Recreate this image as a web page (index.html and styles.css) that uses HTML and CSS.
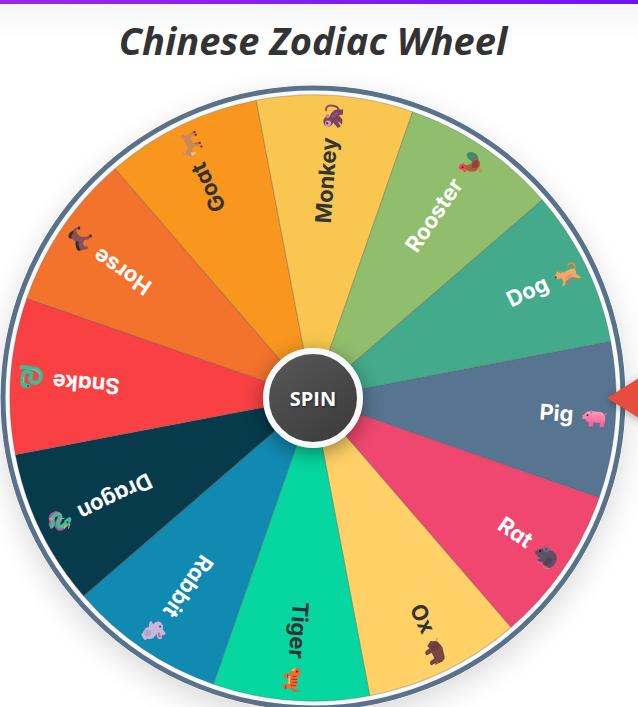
FILE: index.html
```html
<!DOCTYPE html>
<html lang="en">
<head>
    <meta charset="UTF-8">
    <meta name="viewport" content="width=device-width, initial-scale=1.0">
    <title>Chinese Zodiac Wheel</title>
    <link rel="stylesheet" href="styles.css">
</head>
<body>

<main class="page">
    <h1 class="title">Chinese Zodiac Wheel</h1>

    <div class="wheel-container">
        <svg class="wheel" viewBox="-313 -313 626 626" role="img" aria-label="Zodiac wheel">
            <defs>
                <path id="slice" d="M0 0L292.68 -78.42A303 303 0 0 1 292.68 78.42Z"/>
                <linearGradient id="pinkSkin" x1="0" y1="0" x2="0" y2="1">
                    <stop offset="0" stop-color="#ff9fb5"/>
                    <stop offset="1" stop-color="#f8589a"/>
                </linearGradient>
            </defs>

            <circle class="rim" r="310"/>

            <g transform="rotate(4.2)">
                <!-- Pig -->
                <g class="slice">
                    <use href="#slice" fill="#577590"/>
                    <text x="261" y="5">Pig</text>
                    <g transform="translate(282 0)">
                        <path fill="#e84c86" d="M-5 3h4v5h-4zM6 3h4v5h-4z"/>
                        <path fill="url(#pinkSkin)" d="M-11 -2Q-9 -7 -5 -7L-3 -8L-1 -7H6Q11 -6 11 0L10 8H6V4H-1V8H-5V4Q-8 4 -9 1L-11 1Z"/>
                        <path fill="#ff7d9b" d="M-12 -3h3v4h-3z"/>
                        <path fill="#e0608c" d="M-5 -8L-2 -7L-3 -4Z"/>
                        <circle cx="-7" cy="-3" r="1" fill="#402030"/>
                        <path d="M10 -4l2 -2" stroke="#ff7d9b" stroke-width="1"/>
                    </g>
                </g>

                <!-- Rat -->
                <g class="slice" transform="rotate(30)">
                    <use href="#slice" fill="#ef476f"/>
                    <text x="261" y="5">Rat</text>
                    <g transform="translate(282 0)">
                        <path d="M9 6Q10 11 3 10Q-2 8 -5 10" fill="none" stroke="#b9839c" stroke-width="1"/>
                        <path fill="#5d5264" d="M-12 2Q-10 -4 -6 -5Q-2 -6 1 -8Q7 -9 10 -4Q13 3 9 8H3L1 6L-3 8H-6L-4 5Q-10 5 -12 2Z"/>
                        <path fill="#4f4656" d="M1 1Q5 -4 8 1Q9 5 4 8H1Z"/>
                        <circle cx="-4" cy="-6" r="3" fill="#776980"/>
                        <circle cx="-4" cy="-6" r="1" fill="#493a51"/>
                        <circle cx="-8" cy="-1" r="1" fill="#17121b"/>
                    </g>
                </g>

                <!-- Ox -->
                <g class="slice dark" transform="rotate(60)">
                    <use href="#slice" fill="#ffd166"/>
                    <text x="261" y="5">Ox</text>
                    <g transform="translate(282 0)">
                        <path fill="#56303a" d="M-4 2h3v8h-3zM7 2h3v8h-3z"/>
                        <path fill="#7b4548" d="M-12 0L-9 -6Q-3 -8 -1 -8Q3 -7 8 -6Q12 -5 11 1L9 5L10 9H6L5 4H-1V9H-5L-6 4L-9 5Z"/>
                        <path fill="#6d3c43" d="M-10 -4Q-5 -8 -2 -4Q0 1 -6 4Z"/>
                        <path d="M-9 -5Q-12 -6 -11 -8" fill="none" stroke="#b98e7d" stroke-width="1"/>
                        <path d="M11 -2V6" stroke="#56303a" stroke-width="1"/>
                    </g>
                </g>

                <!-- Tiger -->
                <g class="slice dark" transform="rotate(90)">
                    <use href="#slice" fill="#06d6a0"/>
                    <text x="261" y="5">Tiger</text>
                    <g transform="translate(282 0)">
                        <path d="M9 0Q12 -1 11 -7" fill="none" stroke="#e85a27" stroke-width="2" stroke-linecap="round"/>
                        <path fill="#ef6a32" d="M-11 -6L-9 -8L-7 -7L-4 -8L-3 -5H7Q10 -4 9 1L10 9H6L5 4H0L-1 9H-5L-5 3L-9 2L-12 -2Z"/>
                        <path fill="#ffb45f" d="M-12 -3L-8 -1L-8 2L-10 1ZM-3 2H5V4H-3Z"/>
                        <path d="M-3 -4V0M0 -5V1M3 -5V0M6 -4V1M-5 5h4M6 6h4" stroke="#a3342f" stroke-width="1"/>
                        <circle cx="-8" cy="-4" r="1" fill="#402018"/>
                    </g>
                </g>

                <!-- Rabbit -->
                <g class="slice" transform="rotate(120)">
                    <use href="#slice" fill="#118ab2"/>
                    <text x="261" y="5">Rabbit</text>
                    <g transform="translate(282 0)">
                        <path fill="#c9b6dc" d="M-11 0Q-10 -5 -6 -6L-5 -10Q-2 -12 -1 -8Q3 -12 4 -8Q4 -5 1 -3Q9 -4 10 2Q14 2 12 6L10 9H2L0 7L-4 9H-7L-5 5Q-10 5 -11 0Z"/>
                        <path fill="#b5a0cd" d="M2 3Q6 -1 9 4Q9 8 3 8Z"/>
                        <path d="M2 -8L-1 -4" stroke="#d9628d" stroke-width="2"/>
                        <circle cx="-7" cy="-2" r="1" fill="#533b65"/>
                    </g>
                </g>

                <!-- Dragon -->
                <g class="slice" transform="rotate(150)">
                    <use href="#slice" fill="#073b4c"/>
                    <text x="261" y="5">Dragon</text>
                    <g transform="translate(282 0)">
                        <path d="M-5 -6Q4 -10 4 -4Q3 -1 -1 1Q-5 5 0 8Q6 9 7 3Q8 -1 11 -1" fill="none" stroke="#c44793" stroke-width="5"/>
                        <path d="M-6 -5Q3 -8 3 -4Q2 -1 -2 2Q-5 6 0 7Q5 7 6 2Q7 -2 11 -2" fill="none" stroke="#48b798" stroke-width="4"/>
                        <path fill="#48b798" d="M-12 -4L-7 -9L-2 -6L-5 -2L-11 -1Z"/>
                        <path d="M-8 -8L-5 -11M-5 -7L-1 -9M-2 1L-6 0M5 4L8 6" stroke="#e7bf59" stroke-width="1"/>
                        <circle cx="-7" cy="-5" r="1" fill="#173838"/>
                    </g>
                </g>

                <!-- Snake -->
                <g class="slice" transform="rotate(180)">
                    <use href="#slice" fill="#f94144"/>
                    <text x="261" y="5">Snake</text>
                    <g transform="translate(282 0)">
                        <path d="M11 9Q7 10 1 9Q-9 9 -9 1Q-8 -6 -2 -5Q3 -3 1 1Q-1 4 3 5Q9 6 9 0V-6Q8 -10 3 -9" fill="none" stroke="#3dbb93" stroke-width="4" stroke-linecap="round"/>
                        <path d="M-8 3Q-6 8 1 8M8 -6V0" fill="none" stroke="#6ed2a3" stroke-width="1"/>
                        <path fill="#3dbb93" d="M0 -9Q3 -13 8 -10L7 -6L2 -7Z"/>
                        <circle cx="3" cy="-9" r="1" fill="#24574f"/>
                    </g>
                </g>

                <!-- Horse -->
                <g class="slice" transform="rotate(210)">
                    <use href="#slice" fill="#f3722c"/>
                    <text x="261" y="5">Horse</text>
                    <g transform="translate(282 0)">
                        <path fill="#342c35" d="M7 -4Q12 -7 12 0L10 5L8 1Z"/>
                        <path fill="#875157" d="M-12 -3L-7 -9L-5 -10L-3 -7L0 -4H6Q10 -3 9 2L11 5L8 10H6L8 5L4 3H0L-4 6L-6 10H-8L-7 5L-4 2L-5 -2L-8 -3L-10 -1Z"/>
                        <path d="M-6 -9Q-1 -8 1 -3" fill="none" stroke="#342c35" stroke-width="3"/>
                        <path d="M-8 8l2 2M6 8l2 2" stroke="#342c35" stroke-width="2"/>
                    </g>
                </g>

                <!-- Goat -->
                <g class="slice dark" transform="rotate(240)">
                    <use href="#slice" fill="#f8961e"/>
                    <text x="261" y="5">Goat</text>
                    <g transform="translate(282 0)">
                        <path fill="#b86e4c" d="M-3 1L0 1L-2 10H-4ZM6 1L9 1L10 10H8Z"/>
                        <path fill="#cc8858" d="M-12 -4L-8 -8L-5 -7L-2 -4H7L11 -6L12 -3L9 0L10 4L8 9H6L6 3H-1L-5 9H-7L-4 3L-5 -1L-10 -1Z"/>
                        <path d="M-8 -7Q-8 -10 -4 -10" fill="none" stroke="#aaa27e" stroke-width="2"/>
                        <path d="M-7 8v2M-3 8v2M6 8v2M9 8v2" stroke="#7c263a" stroke-width="2"/>
                        <path fill="#eec68e" d="M-12 -4L-8 -3L-10 2Z"/>
                    </g>
                </g>

                <!-- Monkey -->
                <g class="slice dark" transform="rotate(270)">
                    <use href="#slice" fill="#f9c74f"/>
                    <text x="261" y="5">Monkey</text>
                    <g transform="translate(282 0)">
                        <path d="M4 4Q11 6 11 -2Q11 -9 6 -8" fill="none" stroke="#81506b" stroke-width="2" stroke-linecap="round"/>
                        <path fill="#784461" d="M-5 -4Q3 -5 7 1L8 9H3L2 5L-2 9H-7L-4 4L-9 8L-11 5L-6 0Z"/>
                        <path fill="#925172" d="M-2 -2Q5 -2 5 5L1 3Z"/>
                        <circle cx="-5" cy="-5" r="5" fill="#80445f"/>
                        <circle cx="-7" cy="-5" r="3" fill="#d88fc5"/>
                        <circle cx="0" cy="-6" r="2" fill="#c878a9"/>
                        <circle cx="-7" cy="-6" r="1" fill="#46233d"/>
                    </g>
                </g>

                <!-- Rooster -->
                <g class="slice" transform="rotate(300)">
                    <use href="#slice" fill="#90be6d"/>
                    <text x="261" y="5">Rooster</text>
                    <g transform="translate(282 0)">
                        <path fill="#3d8a6c" d="M3 0Q2 -9 7 -10Q13 -8 11 0L7 4Z"/>
                        <path fill="#b25a3b" d="M-8 -6L-4 -6Q-2 -1 3 -1L8 -2Q10 7 1 8Q-6 7 -7 0Z"/>
                        <path fill="#8c443c" d="M-2 2Q4 -3 7 2Q5 7 0 6Z"/>
                        <path fill="#f04457" d="M-10 -6L-10 -9L-8 -9L-6 -10L-5 -8L-3 -8L-4 -4L-8 -3L-8 0L-10 -2Z"/>
                        <path fill="#e6a23d" d="M-10 -6L-12 -4L-9 -3Z"/>
                        <path d="M1 7V11H-2" fill="none" stroke="#d98639" stroke-width="2"/>
                        <circle cx="-7" cy="-6" r="1" fill="#4a2029"/>
                    </g>
                </g>

                <!-- Dog -->
                <g class="slice" transform="rotate(330)">
                    <use href="#slice" fill="#43aa8b"/>
                    <text x="261" y="5">Dog</text>
                    <g transform="translate(282 0)">
                        <path d="M8 -1Q12 -3 11 -8Q8 -11 5 -8" fill="none" stroke="#d98b4b" stroke-width="2" stroke-linecap="round"/>
                        <path fill="#c86f5c" d="M-3 2L1 3L0 8H-3ZM5 2L8 1L8 8H5Z"/>
                        <path fill="#f0a965" d="M-12 -4L-8 -7L-6 -8L-4 -6L-2 -4H6Q10 -4 10 0L9 3L12 8H9L5 4H0L-4 5L-6 8H-9L-6 4L-6 0L-10 0Z"/>
                        <path fill="#e98b7d" d="M-3 1Q2 -1 6 2L0 4Z"/>
                        <path fill="#c7764c" d="M-7 -8L-4 -7L-4 -3Z"/>
                        <circle cx="-11" cy="-3" r="1" fill="#40302a"/>
                    </g>
                </g>
            </g>
        </svg>

        <button type="button" class="spin-btn">SPIN</button>
        <div class="pointer"></div>
    </div>
</main>

</body>
</html>
```

FILE: styles.css
```css
* {
    box-sizing: border-box;
}
body {
    margin: 0;
    background-color: #fff;
    color: #333;
    font-family: "Open Sans", "Noto Sans", sans-serif;
}
.page {
    height: 100vh;
    overflow: hidden;
    padding-right: 12px;
    background: linear-gradient(90deg, #9b28e8, #6f12fa) top / 100% 4px no-repeat,
        linear-gradient(#f5f6f6, #fff) 0 4px / 100% 34px no-repeat;
}
.title {
    margin: 0;
    padding: 15px 0 20px;
    font-size: 38px;
    line-height: 50px;
    font-weight: bold;
    font-style: italic;
    text-align: center;
}
.wheel-container {
    position: relative;
}
.wheel {
    display: block;
    width: 100%;
    border-radius: 50%;
    box-shadow: 0 10px 30px rgba(0, 0, 0, 0.15);
}
.rim {
    fill: #f8f9fa;
    stroke: #5a718a;
    stroke-width: 5;
}
.slice use {
    stroke: rgba(80, 80, 80, 0.3);
    stroke-width: 1;
}
.slice text {
    font-family: Inter, "Open Sans", sans-serif;
    font-size: 22px;
    font-weight: 700;
    font-feature-settings: "cv11";
    text-anchor: end;
    fill: #fff;
}
.slice.dark text {
    fill: #333;
}
.spin-btn {
    position: absolute;
    top: 50%;
    left: 50%;
    width: 100px;
    height: 100px;
    padding: 0;
    transform: translate(-50%, -50%);
    border: 6px solid #f8f9fa;
    border-radius: 50%;
    background: linear-gradient(145deg, #5a5a5a, #383838) border-box;
    box-shadow: 0 5px 20px rgba(0, 0, 0, 0.4);
    color: #fff;
    font-family: inherit;
    font-size: 20px;
    font-weight: bold;
    text-shadow: 1px 1px 2px rgba(0, 0, 0, 0.5);
    cursor: pointer;
}
.pointer {
    position: absolute;
    top: 50%;
    right: -29px;
    transform: translateY(-50%);
    border-top: 30px solid transparent;
    border-bottom: 30px solid transparent;
    border-right: 48px solid #e74c3c;
    filter: drop-shadow(0 2px 4px rgba(0, 0, 0, 0.3));
}
```
